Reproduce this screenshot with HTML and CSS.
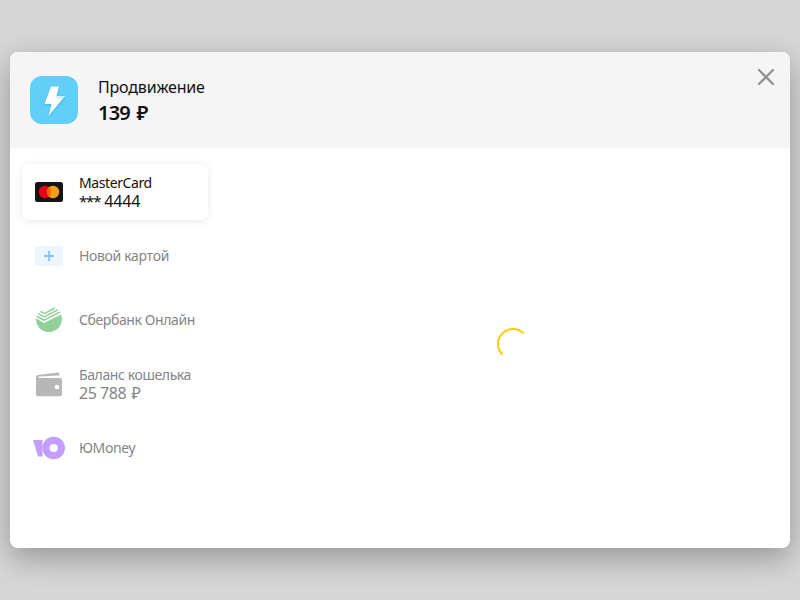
FILE: index.html
```html
<!DOCTYPE html>
<html lang="ru">
<head>
<meta charset="utf-8">
<title>Продвижение</title>
<link rel="stylesheet" href="styles.css">
</head>
<body>
<main class="dialog">
  <header class="header">
    <svg class="product" viewBox="0 0 48 48">
      <rect width="48" height="48" rx="12" fill="#61cffa"/>
      <path class="bolt-shadow" d="M21 10.500h8L26.500 20H35L18.500 40l3-12H14.500z"/>
      <path d="M21 10.500h8L26.500 20H35L18.500 40l3-12H14.500z" fill="#fff"/>
      <path d="M26.500 20H35l-2.500 3.200-7-1z" fill="#d5f0fa"/>
    </svg>
    <div class="summary">
      <div class="name">Продвижение</div>
      <div class="price">139 ₽</div>
    </div>
    <button class="close" aria-label="Закрыть">
      <svg width="18" height="18" viewBox="0 0 18 18"><path d="M2 2l14 14M16 2L2 16" stroke="#929292" stroke-width="2.300" stroke-linecap="round"/></svg>
    </button>
  </header>
  <div class="content">
    <nav class="methods">
      <div class="method selected">
        <svg class="icon" viewBox="0 0 32 32">
          <rect x="2" y="6" width="28" height="20" rx="2.500" fill="#151515"/>
          <circle cx="12" cy="16" r="6.200" fill="#eb001b"/>
          <circle cx="20" cy="16" r="6.200" fill="#f79e1b"/>
          <path d="M16 11.260a6.200 6.200 0 0 1 0 9.480a6.200 6.200 0 0 1 0-9.480z" fill="#ff5f00"/>
        </svg>
        <div class="label"><div class="mc">MasterCard</div><div class="detail digits"><span class="mask">***</span> 4444</div></div>
      </div>
      <div class="method">
        <svg class="icon" viewBox="0 0 32 32">
          <rect x="2" y="6" width="28" height="20" rx="2" fill="#edf6fe"/>
          <path d="M16 11v10M11 16h10" stroke="#88c2fc" stroke-width="1.800"/>
        </svg>
        <div class="label new-card">Новой картой</div>
      </div>
      <div class="method">
        <svg class="icon" viewBox="0 0 32 32">
          <path d="M3 14.300L11 18.900 28.100 10.400A13 13 0 1 1 3 14.300z" fill="#93cf99"/>
          <g fill="none" stroke="#93cf99" stroke-width="1.600">
            <path d="M7.500 7.400l4 2.300L21.800 4"/>
            <path d="M5.300 9.600l6 3.300L24.700 5.700"/>
            <path d="M3.700 12.200l7.500 4L27.200 7.900"/>
          </g>
        </svg>
        <div class="label sber">Сбербанк Онлайн</div>
      </div>
      <div class="method">
        <svg class="icon" viewBox="0 0 32 32">
          <path d="M3 9.300Q3 7.500 5 7L25 4.600Q26.300 4.500 26.300 6v1.500L6 8.600Q4.800 8.800 5.800 10H27q2 0 2 2v14.300q0 2-2 2H5q-2 0-2-2z" fill="#b7b7b7"/>
          <circle cx="24" cy="19" r="2.300" fill="#fff"/>
        </svg>
        <div class="label"><div class="balance">Баланс кошелька</div><div class="detail amount">25<span class="thin"> </span>788&nbsp;<span class="ruble">₽</span></div></div>
      </div>
      <div class="method">
        <svg class="icon" viewBox="0 0 32 32">
          <path d="M0 8h9.500v16.500H5z" fill="#c49eff"/>
          <circle cx="20.700" cy="16" r="7.700" fill="none" stroke="#c49eff" stroke-width="7.200"/>
        </svg>
        <div class="label yoo">ЮMoney</div>
      </div>
    </nav>
    <section class="pane">
      <svg class="spinner" width="32" height="32" viewBox="0 0 32 32"><path d="M26 4.820A15 15 0 0 0 4.820 26" fill="none" stroke="#fc0" stroke-width="2" stroke-linecap="round"/></svg>
    </section>
  </div>
</main>
</body>
</html>
```
FILE: styles.css
```css
* { box-sizing: border-box; }
body {
  margin: 0;
  height: 600px;
  display: flex;
  align-items: center;
  justify-content: center;
  overflow: hidden;
  background: #d6d6d6;
  font-family: "Noto Sans", sans-serif;
  color: #111;
}
.dialog {
  width: 780px;
  height: 496px;
  display: flex;
  flex-direction: column;
  border-radius: 8px;
  background: #fff;
  overflow: hidden;
  box-shadow: 0 10px 30px rgba(0, 0, 0, .3);
}
.header {
  height: 96px;
  display: flex;
  padding: 24px 15px 0 20px;
  background: #f5f5f5;
}
.product { width: 48px; height: 48px; }
.bolt-shadow { fill: #249ed0; opacity: .6; filter: blur(1px); transform: translate(0, 1px); }
.summary { flex: 1; margin-left: 20px; white-space: nowrap; }
.name { font-size: 16px; line-height: 22px; letter-spacing: -.18px; }
.price { font-size: 20px; line-height: 30px; font-weight: 600; letter-spacing: -.8px; word-spacing: 2.3px; }
.close {
  width: 18px;
  height: 18px;
  margin-top: -8px;
  padding: 0;
  border: 0;
  background: none;
}
.close svg { display: block; }
.content { flex: 1; display: flex; }
.methods {
  width: 210px;
  padding: 16px 12px;
  display: flex;
  flex-direction: column;
  gap: 8px;
}
.method {
  height: 56px;
  display: flex;
  align-items: center;
  padding-left: 11px;
  border-radius: 8px;
  color: #858585;
  white-space: nowrap;
}
.selected { color: #111; box-shadow: 0 1px 8px rgba(0, 0, 0, .09); }
.icon { flex: none; width: 32px; height: 32px; margin-right: 14px; }
.label { font-size: 14px; line-height: 18px; letter-spacing: -.4px; }
.new-card { letter-spacing: -.33px; }
.detail { font-size: 16px; }
.digits { letter-spacing: -.15px; }
.mask { font-size: 15px; letter-spacing: -1.2px; }
.amount { letter-spacing: -.35px; }
.thin { letter-spacing: -.9px; }
.ruble { margin-left: 1.4px; }
.pane {
  flex: 1;
  padding: 180px 0 0 277px;
}
.spinner { display: block; }
```
